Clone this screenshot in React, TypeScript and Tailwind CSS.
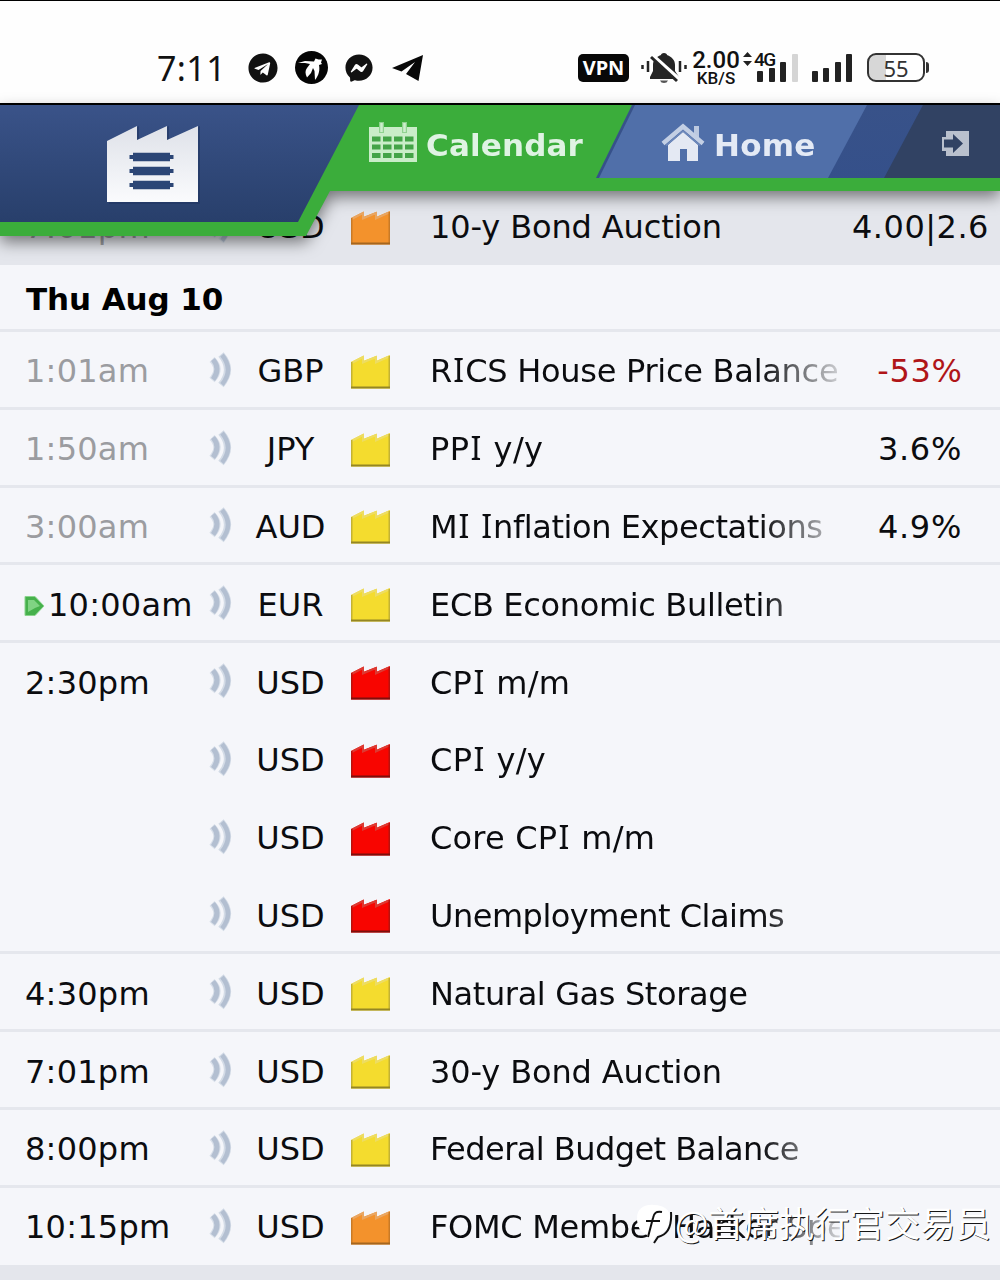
import React from "react";
import { FaTelegram, FaFacebookMessenger } from "react-icons/fa";

type Impact = "low" | "medium" | "high";

interface Row {
  time?: string;
  past?: boolean;
  next?: boolean;
  rule?: boolean;
  currency: string;
  impact: Impact;
  title: string;
  tracking: string;
  actual?: string;
  negative?: boolean;
}

const rows: Row[] = [
  { time: "1:01am", past: true, rule: true, currency: "GBP", impact: "low", title: "RICS House Price Balance", tracking: "tracking-[-0.27px]", actual: "-53%", negative: true },
  { time: "1:50am", past: true, rule: true, currency: "JPY", impact: "low", title: "PPI y/y", tracking: "tracking-[0.35px]", actual: "3.6%" },
  { time: "3:00am", past: true, rule: true, currency: "AUD", impact: "low", title: "MI Inflation Expectations", tracking: "tracking-[-0.42px]", actual: "4.9%" },
  { time: "10:00am", next: true, rule: true, currency: "EUR", impact: "low", title: "ECB Economic Bulletin", tracking: "tracking-[-0.34px]" },
  { time: "2:30pm", rule: true, currency: "USD", impact: "high", title: "CPI m/m", tracking: "tracking-[0.25px]" },
  { currency: "USD", impact: "high", title: "CPI y/y", tracking: "tracking-[0.3px]" },
  { currency: "USD", impact: "high", title: "Core CPI m/m", tracking: "tracking-[0.2px]" },
  { currency: "USD", impact: "high", title: "Unemployment Claims", tracking: "tracking-[-0.5px]" },
  { time: "4:30pm", rule: true, currency: "USD", impact: "low", title: "Natural Gas Storage", tracking: "tracking-[-0.38px]" },
  { time: "7:01pm", rule: true, currency: "USD", impact: "low", title: "30-y Bond Auction", tracking: "tracking-[-0.13px]" },
  { time: "8:00pm", rule: true, currency: "USD", impact: "low", title: "Federal Budget Balance", tracking: "tracking-[-0.55px]" },
  { time: "10:15pm", rule: true, currency: "USD", impact: "medium", title: "FOMC Member Harker Speaks", tracking: "tracking-[-0.3px]" },
];

const impactColors: Record<Impact, { top: string; fill: string; edge: string; base: string }> = {
  low: { top: "#eddc62", fill: "#f4dc2e", edge: "#c4b232", base: "#948624" },
  medium: { top: "#e9a662", fill: "#f3922c", edge: "#c97a26", base: "#a5661f" },
  high: { top: "#dc3a32", fill: "#f80500", edge: "#b8120d", base: "#7d0f0c" },
};

function ImpactIcon({ impact }: { impact: Impact }) {
  const c = impactColors[impact];
  return (
    <svg className="block h-[35px] w-[39px]" viewBox="0 0 39 35">
      <path d="M0 34.500V8L12 2v5L25 2v5L39 1v33.500Z" fill={c.fill} />
      <path d="M.5 9 12 3v5.500L25 3v5.500L38 2.500" fill="none" stroke={c.top} strokeWidth="2" />
      <path d="M.75 34V8M38.250 34V2" stroke={c.edge} strokeWidth="1.500" />
      <path d="M0 33.500H39" stroke={c.base} strokeWidth="2" />
    </svg>
  );
}

function SoundIcon() {
  return (
    <svg className="block h-[36px] w-[24px]" viewBox="0 0 24 36" fill="none">
      <path d="M3 7.500Q13 17 3 28" stroke="#d8dfe9" strokeWidth="7" />
      <path d="M4 7.500Q12 17 4 27.500" stroke="#b3bfd1" strokeWidth="5" />
      <path d="M12 2.500Q25 17.500 12 33" stroke="#d3dbe6" strokeWidth="7" />
      <path d="M13 3Q25 17.500 13 32.500" stroke="#b3bfd1" strokeWidth="4.500" />
    </svg>
  );
}

function NextMarker() {
  return (
    <svg className="block h-[22px] w-[21px] shrink-0" viewBox="0 0 21 22">
      <path d="M1 1.500h10L20 11l-9 9.500H1Z" fill="#46b14c" stroke="#8ad48d" />
      <path d="M4 5h6l6 6-5 2-7 4Z" fill="#80d383" />
    </svg>
  );
}

function Label({ text }: { text: string }) {
  return (
    <>
      {text.split(/(I)/).map((part, i) =>
        part === "I" ? (
          <span key={i} className="px-[1.3px] font-['Noto_Sans'] leading-none">I</span>
        ) : (
          <React.Fragment key={i}>{part}</React.Fragment>
        ),
      )}
    </>
  );
}

function EventRow({ row }: { row: Row }) {
  return (
    <div className={`flex h-[77.8px] shrink-0 items-center border-t-[3px] pt-[4px] ${row.rule ? "border-[#e5e7ed]" : "border-transparent"}`}>
      <div className={`flex w-[209px] items-center tracking-[0.25px] ${row.next ? "pl-[24px]" : "pl-[25px]"} ${row.past ? "text-[#9b9ca0]" : "text-[#0b0c0f]"}`}>
        {row.next && <span className="mr-[3px] pt-[3px]"><NextMarker /></span>}
        {row.time}
      </div>
      <div className="-mt-[3px] w-[24px]"><SoundIcon /></div>
      <div className="w-[115px] text-center">{row.currency}</div>
      <div className="w-[82px] pl-[3px]"><ImpactIcon impact={row.impact} /></div>
      <div className={`w-[415px] overflow-hidden [mask-image:linear-gradient(to_right,black_330px,transparent_425px)] ${row.tracking}`}><Label text={row.title} /></div>
      <div className={`flex-1 pr-[5px] text-center tracking-[0.7px] ${row.negative ? "text-[#b01518]" : ""}`}>{row.actual}</div>
    </div>
  );
}

function BirdIcon() {
  return (
    <svg className="block h-[33px] w-[33px]" viewBox="0 0 33 33">
      <circle cx="16.500" cy="16.500" r="16.500" fill="#050505" />
      <path d="M3 12 10 10l9 .5 1.500-3 3 1 3.500 0-1 3 1 1.500-3 1c1 5 0 10-4 15l-.5-9-1.500-3-2 5-4 4.500c-2-4-2-7 0-9.500l3-4-5-1Z" fill="#fff" />
    </svg>
  );
}

function PlaneIcon() {
  return (
    <svg className="block h-[28px] w-[32px]" viewBox="0 0 32 28">
      <path d="M0 14 31 1 26.500 27 14 20 23 8 9.500 17.500Z" fill="#080808" />
    </svg>
  );
}

function MutedBell() {
  return (
    <svg className="block h-[34px] w-[46px]" viewBox="0 0 46 34">
      <path d="M1.500 14v4M7 10v11M39 10v11M44.500 14v4" stroke="#252525" strokeWidth="2.500" />
      <path d="M23 2c2 0 3 1 3 2 5 2 8 5 8 10v6l4 6v2H9v-2l3-6v-6c0-5 3-8 8-10 0-1 1-2 3-2Z" fill="#252525" />
      <path d="M19 29.500h8q-1 2.500-4 2.500t-4-2.500Z" fill="#555" />
      <path d="M11 4 39 29" stroke="#fff" strokeWidth="4" />
      <path d="M10 6 36 30" stroke="#252525" strokeWidth="3" />
    </svg>
  );
}

function Signal({ faded }: { faded?: boolean }) {
  return (
    <div className="flex h-[28px] items-end gap-[5.500px]">
      <i className="h-[11px] w-[6px] rounded-[1px] bg-[#222]" />
      <i className="h-[14px] w-[6px] rounded-[1px] bg-[#222]" />
      <i className="h-[20px] w-[6px] rounded-[1px] bg-[#222]" />
      <i className={`h-[28px] w-[6px] rounded-[1px] ${faded ? "bg-[#d5d5d5]" : "bg-[#222]"}`} />
    </div>
  );
}

function StatusBar() {
  return (
    <div className="flex h-[105px] items-center border-t border-b-2 border-black bg-[#fefefe] pt-[31px] font-['Roboto',sans-serif] text-[#111]">
      <div className="ml-[157px] w-[91px] font-['Noto_Sans'] text-[34px] leading-none tracking-[0.4px]">7:11</div>
      <FaTelegram className="size-[30px]" />
      <span className="ml-[17px]"><BirdIcon /></span>
      <FaFacebookMessenger className="ml-[17px] size-[28px]" />
      <span className="ml-[19px]"><PlaneIcon /></span>
      <div className="ml-[154px] flex h-[28px] w-[51px] items-center justify-center rounded-[5px] bg-[#080808] font-['Noto_Sans'] text-[20px] font-bold text-white">VPN</div>
      <span className="ml-[12px]"><MutedBell /></span>
      <div className="ml-[4px] w-[50px] pt-[2px] text-center font-medium">
        <div className="text-[24px] leading-[19px]">2.00</div>
        <div className="text-[17px] leading-[17px]">KB/S</div>
      </div>
      <svg className="mb-[18px] ml-[2px] h-[14px] w-[9px]" viewBox="0 0 9 14"><path d="m0 5 4.500-5L9 5ZM0 9h9l-4.500 5Z" fill="#222" /></svg>
      <div className="relative ml-[5px]">
        <Signal faded />
        <span className="absolute -top-[3px] -left-[3px] bg-[#fefefe] text-[19px] leading-[17px] font-medium tracking-[-1.5px]">4G</span>
      </div>
      <span className="ml-[14px]"><Signal /></span>
      <div className="ml-[15px] flex h-[29px] w-[58px] items-center justify-center rounded-[9px] border-2 border-[#333] bg-[linear-gradient(to_right,#d7d7d7_17px,#fff_17px)] font-['Noto_Sans'] text-[22px] leading-none text-[#333]">55</div>
      <i className="ml-px h-[11px] w-[3px] rounded-r bg-[#333]" />
    </div>
  );
}

function FactoryLogo() {
  return (
    <svg className="h-[84px] w-[100px]" viewBox="0 0 100 84">
      <defs>
        <linearGradient id="factory" x2="0" y2="1"><stop stopColor="#dfe2e9" /><stop offset="1" stopColor="#fafbfd" /></linearGradient>
      </defs>
      <path d="M5 81V19L35 3v14L65 3v14L96 3v78Z" fill="#203660" opacity=".6" />
      <path d="M3 79V18L33 3v14L63 3v14L94 3v76Z" fill="url(#factory)" />
      <path d="M29 34h37M29 48h37M29 62h37" stroke="#2c4676" strokeWidth="8.500" />
      <path d="M25.500 34h44M25.500 48h44M25.500 62h44" stroke="#2c4676" strokeWidth="4" />
    </svg>
  );
}

function CalendarIcon() {
  return (
    <svg className="h-[41px] w-[48px]" viewBox="0 0 48 41">
      <path d="M0 5h48v35H0Z" fill="#c9edc8" />
      <path d="M12.500 0v11M35.500 0v11" stroke="#8fd28f" strokeWidth="5" />
      <path d="M12.500 1v9M35.500 1v9" stroke="#cdeecd" strokeWidth="2.500" />
      {[14.5, 22.5, 31].map((y) =>
        [3, 14, 25, 36].map((x) => <rect key={`${x}-${y}`} x={x} y={y} width="8.500" height="5" fill="#43a347" />),
      )}
    </svg>
  );
}

function HomeIcon() {
  return (
    <svg className="h-[39px] w-[44px]" viewBox="0 0 44 39">
      <path d="M33 3h5v13l-5-5Z" fill="#bcc9e0" />
      <path d="M7 22 22 9l15 13v16H26V26h-7v12H7Z" fill="#e4e9f3" />
      <path d="M2 20.500 22 3.500l20 17" fill="none" stroke="#c3cfe4" strokeWidth="4.500" />
      <path d="M5 22.500 22 8l17 14.500" fill="none" stroke="#6f8abb" strokeWidth="1.500" />
    </svg>
  );
}

function ExitIcon() {
  return (
    <svg className="h-[27px] w-[29px]" viewBox="0 0 29 27">
      <path d="M5 1h23v25H5v-5H1V7h4Z" fill="#b9c0cd" />
      <path d="M3 9.500h9V4l10 9.500L12 23v-5.500H3Z" fill="#314263" />
    </svg>
  );
}

function Header() {
  return (
    <header className="absolute top-[105px] left-0 z-10 w-full drop-shadow-[0_6px_8px_rgba(0,0,0,0.5)]">
      <div className="flex h-[131px] items-start bg-[#3bad3b] [clip-path:polygon(0_0,1000px_0,1000px_86px,330px_86px,306px_131px,0_131px)]">
        <div className="h-[117px] w-[359px] shrink-0 bg-linear-to-b from-[#3a5389] to-[#283f6b] pt-[18px] pl-[104px] [clip-path:polygon(0_0,359px_0,298px_117px,0_117px)]">
          <FactoryLogo />
        </div>
        <div className="flex h-[73px] flex-1 bg-linear-to-b from-[#385289] to-[#35508a]">
          <div className="-mr-[35px] flex w-[275px] shrink-0 items-center bg-[#3bad3b] pt-px pl-[10px] font-['DejaVu_Sans'] text-[31px] font-bold text-[#dff3e3] [clip-path:polygon(0_0,273px_0,237px_73px,0_73px)]">
            <CalendarIcon /><span className="ml-[9px] pt-[6px] tracking-[0.15px]">Calendar</span>
          </div>
          <div className="-mr-[20px] flex w-[268px] shrink-0 items-center bg-[#506fa9] pt-[2px] pl-[62px] font-['DejaVu_Sans'] text-[31px] font-bold text-[#e4eaf5] [clip-path:polygon(36px_0,268px_0,229px_73px,0_73px)]">
            <HomeIcon /><span className="ml-[9px] pt-[5px] tracking-[0.2px]">Home</span>
          </div>
          <div className="ml-[37px] flex flex-1 items-center bg-[#314263] pt-[3px] pl-[57px] [clip-path:polygon(39px_0,100%_0,100%_100%,0_100%)]">
            <ExitIcon />
          </div>
        </div>
      </div>
    </header>
  );
}

function Watermark() {
  return (
    <div className="absolute top-[1198px] left-[635px] z-20 flex items-center text-white">
      <svg className="h-[48px] w-[38px]" viewBox="0 0 38 48">
        <path d="M19 7C9 6 2 11 2 20c0 9 4 15 10 17l5 7 5-7c8-2 13-9 13-17C35 12 29 7 19 7Z" fill="#fff" />
        <path d="M27 14c-6-1-8 1-9 6l-5 19M11 23h14M36 14c1 15-4 23-13 25l-4 6" fill="none" stroke="#111" strokeWidth="2" />
      </svg>
      <div className="ml-[2px] font-['Noto_Sans_CJK_SC',sans-serif] text-[35.300px] leading-[44px] whitespace-nowrap [text-shadow:1px_1px_0_#161616]">@首席执行官交易员</div>
    </div>
  );
}

export default function App() {
  return (
    <div className="relative flex h-[1280px] w-[1000px] flex-col overflow-hidden bg-[#e4e6ec] font-['DejaVu_Sans',sans-serif] text-[32px] leading-[40px] whitespace-nowrap text-[#0b0c0f]">
      <StatusBar />
      <Header />
      <main className="flex flex-col">
        <div className="flex h-[160px] items-end bg-[#e4e6ec] pb-[18px]">
          <div className="w-[209px] pl-[25px] tracking-[0.25px] text-[#9b9ca0]">7:01pm</div>
          <div className="mb-[3px] w-[24px]"><SoundIcon /></div>
          <div className="w-[115px] text-center">USD</div>
          <div className="mb-[2px] w-[82px] pl-[3px]"><ImpactIcon impact="medium" /></div>
          <div className="w-[422px] tracking-[-0.13px]">10-y Bond Auction</div>
          <div className="tracking-[0.5px]">4.00|2.6</div>
        </div>
        <div className="flex h-[64px] items-center bg-[#f5f6fa] pt-[4px] pl-[26px] text-[31px] font-bold tracking-[-0.1px] text-black">Thu Aug 10</div>
        <div className="flex flex-col bg-[#f5f6fa] pb-[2px]">
          {rows.map((row, i) => <EventRow key={i} row={row} />)}
        </div>
      </main>
      <Watermark />
    </div>
  );
}
